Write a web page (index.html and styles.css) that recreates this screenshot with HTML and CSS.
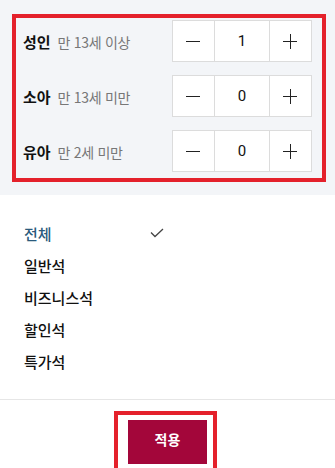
FILE: index.html
```html
<!DOCTYPE html>
<html lang="ko">
<head>
    <meta charset="UTF-8">
    <meta name="viewport" content="width=device-width, initial-scale=1.0">
    <title>인원 및 좌석 선택</title>
    <link rel="stylesheet" href="styles.css">
</head>
<body>
    <div class="passengers">
        <div class="passenger-box">
            <div class="row">
                <div class="label"><strong>성인</strong><span>만 13세 이상</span></div>
                <div class="stepper">
                    <button class="step minus"></button>
                    <div class="count">1</div>
                    <button class="step plus"></button>
                </div>
            </div>
            <div class="row">
                <div class="label"><strong>소아</strong><span>만 13세 미만</span></div>
                <div class="stepper">
                    <button class="step minus"></button>
                    <div class="count">0</div>
                    <button class="step plus"></button>
                </div>
            </div>
            <div class="row">
                <div class="label"><strong>유아</strong><span>만 2세 미만</span></div>
                <div class="stepper">
                    <button class="step minus"></button>
                    <div class="count">0</div>
                    <button class="step plus"></button>
                </div>
            </div>
        </div>
    </div>

    <ul class="seat-list">
        <li class="selected">전체
            <svg width="14" height="10" viewBox="0 0 14 10"><path d="M1 4.5 L5 8.5 L13 1" fill="none" stroke="#444" stroke-width="1.3"/></svg>
        </li>
        <li>일반석</li>
        <li>비즈니스석</li>
        <li>할인석</li>
        <li>특가석</li>
    </ul>

    <div class="footer">
        <div class="apply-wrap">
            <button class="apply">적용</button>
        </div>
    </div>
</body>
</html>
```
FILE: styles.css
```css
body {
    margin: 0;
    font-family: "Noto Sans CJK KR", "Noto Sans", sans-serif;
    background: #fff;
    color: #111;
}

.passengers {
    background: #f3f5f8;
    padding: 14px 9px 13px 12px;
}

.passenger-box {
    border: 4px solid #e4212b;
    padding: 2px 10px 6px 7px;
    display: flex;
    flex-direction: column;
    gap: 13px;
}

.row {
    display: flex;
    align-items: center;
    justify-content: space-between;
    height: 42px;
}

.label strong {
    font-size: 15px;
    font-weight: 700;
    margin-right: 7px;
}

.label span {
    font-size: 14px;
    color: #777;
    letter-spacing: -0.3px;
}

.stepper {
    display: flex;
    height: 42px;
    border: 1px solid #dcdcdc;
    background: #fff;
    box-sizing: border-box;
}

.step {
    width: 41px;
    border: none;
    background: #fff;
    position: relative;
    padding: 0;
}

.step::before,
.plus::after {
    content: "";
    position: absolute;
    left: 13px;
    top: 20px;
    width: 14px;
    height: 1.3px;
    background: #222;
}

.plus::after {
    left: 20px;
    top: 13px;
    width: 1.3px;
    height: 15px;
}

.count {
    width: 54px;
    border-left: 1px solid #dcdcdc;
    border-right: 1px solid #dcdcdc;
    display: flex;
    align-items: center;
    justify-content: center;
    font-size: 15px;
    font-family: Roboto, sans-serif;
}

.seat-list {
    list-style: none;
    margin: 0;
    padding: 22px 0 22px 24px;
    width: 140px;
}

.seat-list li {
    height: 32px;
    display: flex;
    align-items: center;
    justify-content: space-between;
    font-size: 15px;
    font-weight: 500;
}

.seat-list .selected {
    color: #2a5a7c;
}

.footer {
    border-top: 1px solid #e6e6e6;
    padding-top: 11px;
    display: flex;
    justify-content: center;
}

.apply-wrap {
    border: 4px solid #e4212b;
    padding: 5px 6px 5px 10px;
    background: #fff;
    margin-left: -4px;
}

.apply {
    width: 79px;
    height: 44px;
    border: none;
    background: #a3063a;
    color: #fff;
    font-family: "Noto Sans CJK KR", sans-serif;
    font-size: 14px;
    font-weight: 700;
    padding: 0 0 6px;
}
```
